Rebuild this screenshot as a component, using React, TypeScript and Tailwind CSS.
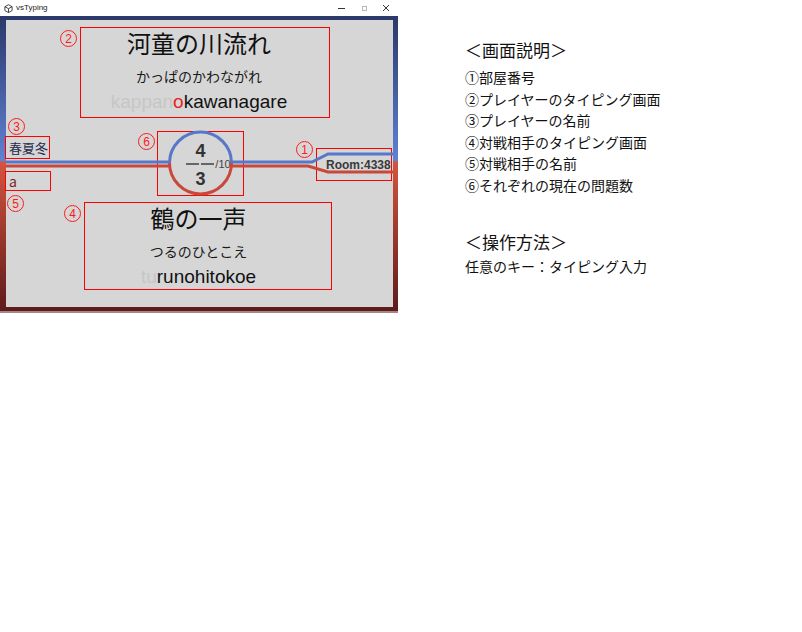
import React from 'react';

const jp = "font-['Noto_Sans_CJK_JP',sans-serif]";
const en = "font-['Liberation_Sans',Arial,sans-serif]";
const box = 'border border-[#ff0000]';

const marks = [
  { n: '2', pos: 'left-[54px] top-[10px]' },
  { n: '3', pos: 'left-[2px] top-[98px]' },
  { n: '6', pos: 'left-[132px] top-[113px]' },
  { n: '1', pos: 'left-[290px] top-[121px]' },
  { n: '5', pos: 'left-[1px] top-[175px]' },
  { n: '4', pos: 'left-[58px] top-[185px]' },
];

const notes = [
  '①部屋番号',
  '②プレイヤーのタイピング画面',
  '③プレイヤーの名前',
  '④対戦相手のタイピング画面',
  '⑤対戦相手の名前',
  '⑥それぞれの現在の問題数',
];

function Mark({ n, pos }: { n: string; pos: string }) {
  return (
    <div
      className={`absolute ${pos} w-[17px] h-[17px] rounded-full border border-[#ff1a1a] flex items-center justify-center text-[12px] leading-none text-[#ff1a1a] ${en}`}
    >
      {n}
    </div>
  );
}

function TitleBar() {
  return (
    <div className="h-[16px] bg-white flex items-center">
      <svg className="ml-[4px]" width="9" height="9" viewBox="0 0 10 10">
        <path
          d="M5 0.8 L9 3 V7.3 L5 9.5 L1 7.3 V3 Z M5 5.2 V9.5 M5 5.2 L9 3 M5 5.2 L1 3"
          fill="none"
          stroke="#333"
          strokeWidth="1"
        />
      </svg>
      <span className={`ml-[3px] text-[8px] leading-none text-[#222] ${en}`}>vsTyping</span>
      <div className="ml-auto mr-[9px] flex items-center">
        <span className="w-[7px] h-px bg-[#333]" />
        <span className="ml-[17px] w-[5px] h-[5px] border border-[#b8b8b8]" />
        <svg className="ml-[16px]" width="6" height="6" viewBox="0 0 6 6">
          <path d="M0 0 L6 6 M6 0 L0 6" stroke="#333" strokeWidth="1" />
        </svg>
      </div>
    </div>
  );
}

function GameLines() {
  return (
    <svg className="absolute inset-0 pointer-events-none" width="387" height="287" viewBox="0 0 387 287">
      <g fill="none" strokeWidth="3">
        <path d="M0 142 H163.5 M225.5 142 H306 L322 134 H387" stroke="#5877c9" />
        <path d="M0 146 H163.5 M225.5 146 H302 L322 152 H387" stroke="#c8493b" />
        <path d="M163.5 143 A31 31 0 0 1 225.5 143" stroke="#5877c9" />
        <path d="M163.5 143 A31 31 0 0 0 225.5 143" stroke="#c8493b" />
      </g>
    </svg>
  );
}

function Game() {
  return (
    <div className="relative w-[387px] h-[287px] pt-[7px] bg-[#d6d6d6]">
      <GameLines />

      {/* player */}
      <div className={`ml-[74px] w-[250px] h-[91px] ${box} flex flex-col items-center pr-[12px]`}>
        <div className="text-[24px] leading-[30px] text-[#111]">河童の川流れ</div>
        <div className="mt-[8px] text-[14px] leading-[20px] text-[#1a1a1a]">かっぱのかわながれ</div>
        <div className={`mt-[5px] text-[19px] leading-[22px] ${en}`}>
          <span className="text-[#c6c6c6]">kappan</span>
          <span className="text-[#e8231f]">o</span>
          <span className="text-[#111]">kawanagare</span>
        </div>
      </div>

      {/* middle */}
      <div className="h-[84px] flex items-start">
        <div className="ml-[-1px] w-[46px] flex flex-col">
          <div className={`mt-[18px] w-[45px] h-[23px] ${box} flex items-center pl-[3px] text-[13px] text-[#262a4c]`}>
            春夏冬
          </div>
          <div className={`mt-[12px] w-[46px] h-[20px] ${box} flex items-center pl-[3px] text-[14px] leading-none text-[#7a1e1e]`}>
            a
          </div>
        </div>

        <div className={`ml-[106px] mt-[13px] w-[87px] h-[65px] ${box} flex flex-col items-center text-[#333] ${en}`}>
          <div className="mt-[10px] text-[18px] leading-[18px] font-bold">4</div>
          <div className="mt-[-1px] flex items-center pl-[16px] h-[10px]">
            <span className="w-[13px] h-[2px] bg-[#666]" />
            <span className="ml-[2px] w-[13px] h-[2px] bg-[#666]" />
            <span className="ml-px text-[11px] leading-[10px] text-[#444]">/10</span>
          </div>
          <div className="mt-[1px] text-[18px] leading-[18px] font-bold">3</div>
        </div>

        <div className={`ml-[72px] mt-[30px] w-[76px] h-[33px] ${box} flex items-center pl-[9px] text-[12px] font-bold text-[#3a3a3a] ${en}`}>
          Room:4338
        </div>
      </div>

      {/* opponent */}
      <div className={`ml-[78px] w-[248px] h-[88px] ${box} flex flex-col items-center pr-[19px]`}>
        <div className="text-[24px] leading-[30px] text-[#111]">鶴の一声</div>
        <div className="mt-[8px] text-[14px] leading-[20px] text-[#1a1a1a]">つるのひとこえ</div>
        <div className={`mt-[5px] text-[19px] leading-[22px] ${en}`}>
          <span className="text-[#c6c6c6]">tu</span>
          <span className="text-[#111]">runohitokoe</span>
        </div>
      </div>

      {marks.map((m) => (
        <Mark key={m.n} n={m.n} pos={m.pos} />
      ))}
    </div>
  );
}

export default function App() {
  return (
    <div className={`w-[802px] h-[632px] bg-white flex items-start ${jp}`}>
      {/* game window */}
      <div className="w-[398px] h-[313px] flex flex-col">
        <TitleBar />
        <div className="h-[295px] pl-[6px] pr-[5px] pt-[4px] bg-[linear-gradient(to_bottom,#2b386a_0%,#5f82d4_49%,#d4543f_49.5%,#5e1b1b_100%)]">
          <Game />
        </div>
        <div className="h-[2px] bg-[#a48888]" />
      </div>

      {/* description */}
      <div className="ml-[67px] pt-[38px] text-[#111]">
        <div className="text-[17px] leading-[24px]">＜画面説明＞</div>
        <ul className="mt-[5px] text-[14px] leading-[21.6px]">
          {notes.map((t) => (
            <li key={t}>{t}</li>
          ))}
        </ul>
        <div className="mt-[33px] text-[17px] leading-[24px]">＜操作方法＞</div>
        <div className="mt-[2px] text-[14px] leading-[21.6px]">任意のキー：タイピング入力</div>
      </div>
    </div>
  );
}
